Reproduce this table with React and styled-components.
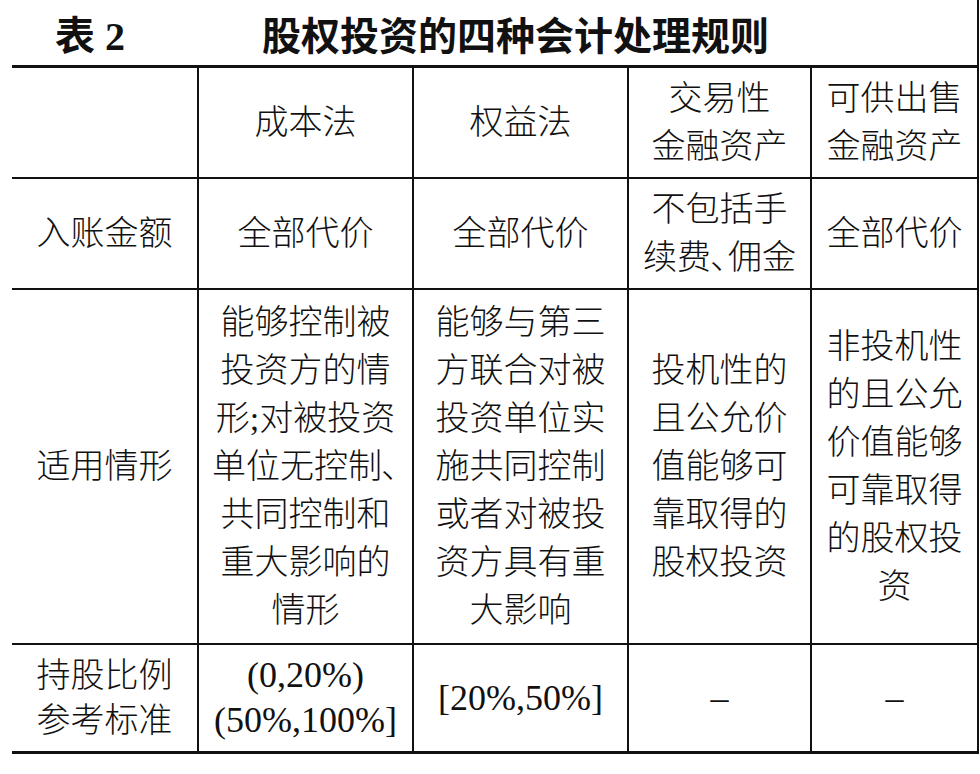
import React from 'react'
import styled, { createGlobalStyle } from 'styled-components'

const GlobalStyle = createGlobalStyle`
    html, body {
        margin: 0;
        padding: 0;
        background: #fff;
    }
    body {
        font-family: "Liberation Serif", "Noto Sans CJK SC", serif;
        color: #111;
    }
`

const Page = styled.div`
    width: 979px;
    height: 754px;
    box-sizing: border-box;
    border-right: 2px solid #111;
`

const TitleBar = styled.div`
    height: 65px;
    display: flex;
    align-items: center;
`

const Label = styled.div`
    width: 262px;
    box-sizing: border-box;
    padding-left: 55px;
    font-size: 40px;
    font-weight: 700;
    white-space: nowrap;
`

const Heading = styled.h1`
    margin: 0;
    font-size: 39px;
    font-weight: 700;
    white-space: nowrap;
`

const Table = styled.div`
    margin-left: 12px;
    display: grid;
    grid-template-columns: 185px 215px 215px 183px 167px;
    grid-template-rows: 109px 111px 355px 108px;
    border-top: 3px solid #111;
    border-bottom: 3px solid #111;
`

const Cell = styled.div`
    box-sizing: border-box;
    display: flex;
    flex-direction: column;
    align-items: center;
    justify-content: center;
    text-align: center;
    font-size: 34px;
    font-weight: 300;
    line-height: ${p => (p.$tight ? '45px' : '48px')};
    border-left: ${p => (p.$firstCol ? 'none' : '2px solid #111')};
    border-top: ${p => (p.$firstRow ? 'none' : '2px solid #111')};
`

const Line = styled.span`
    display: block;
    white-space: nowrap;
    font-size: ${p => (p.$num ? '36px' : 'inherit')};
`

const rows = [
    {
        cells: [
            [],
            ['成本法'],
            ['权益法'],
            ['交易性', '金融资产'],
            ['可供出售', '金融资产'],
        ],
    },
    {
        cells: [
            ['入账金额'],
            ['全部代价'],
            ['全部代价'],
            ['不包括手', '续费､佣金'],
            ['全部代价'],
        ],
    },
    {
        cells: [
            ['适用情形'],
            ['能够控制被', '投资方的情', '形;对被投资', '单位无控制､', '共同控制和', '重大影响的', '情形'],
            ['能够与第三', '方联合对被', '投资单位实', '施共同控制', '或者对被投', '资方具有重', '大影响'],
            ['投机性的', '且公允价', '值能够可', '靠取得的', '股权投资'],
            ['非投机性', '的且公允', '价值能够', '可靠取得', '的股权投', '资'],
        ],
    },
    {
        tight: true,
        num: [false, true, true, true, true],
        cells: [
            ['持股比例', '参考标准'],
            ['(0,20%)', '(50%,100%]'],
            ['[20%,50%]'],
            ['–'],
            ['–'],
        ],
    },
]

export default function App() {
    return (
        <>
            <GlobalStyle />
            <Page>
                <TitleBar>
                    <Label>表 2</Label>
                    <Heading>股权投资的四种会计处理规则</Heading>
                </TitleBar>
                <Table>
                    {rows.map((row, r) =>
                        row.cells.map((lines, c) => (
                            <Cell key={`${r}-${c}`} $firstRow={r === 0} $firstCol={c === 0} $tight={row.tight}>
                                {lines.map((l, i) => (
                                    <Line key={i} $num={row.num ? row.num[c] : false}>{l}</Line>
                                ))}
                            </Cell>
                        ))
                    )}
                </Table>
            </Page>
        </>
    )
}
